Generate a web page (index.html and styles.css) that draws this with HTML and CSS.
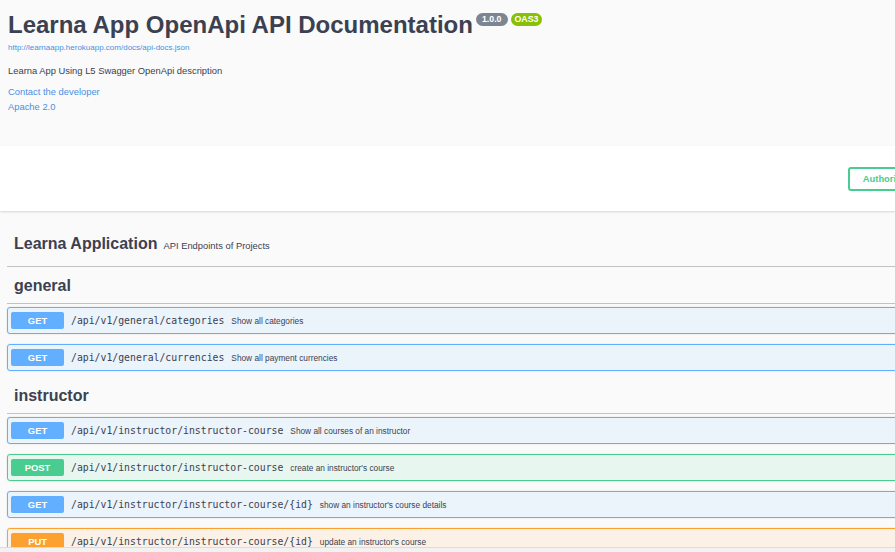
FILE: index.html
```html
<!DOCTYPE html>
<html lang="en">
<head>
<meta charset="utf-8">
<title>Learna App OpenApi API Documentation</title>
<link rel="stylesheet" href="styles.css">
</head>
<body>
<div class="info">
  <div class="wrapper info-inner">
    <div class="title-row">
      <h1 class="title">Learna App OpenApi API Documentation</h1>
      <span class="badge badge-version">1.0.0</span>
      <span class="badge badge-oas">OAS3</span>
    </div>
    <a class="url" href="#">http://learnaapp.herokuapp.com/docs/api-docs.json</a>
    <p class="description">Learna App Using L5 Swagger OpenApi description</p>
    <a class="info-link contact" href="#">Contact the developer</a>
    <a class="info-link license" href="#">Apache 2.0</a>
  </div>
</div>

<div class="schemes">
  <div class="wrapper schemes-inner">
    <button class="authorize">
      <span>Authorize</span>
      <svg class="lock" viewBox="0 0 20 20" width="13" height="13"><path d="M15.8 8H14V5.6C14 2.703 12.665 1 10 1 7.334 1 6 2.703 6 5.6V8H4c-.553 0-1 .646-1 1.199V17c0 .549.428 1.139.951 1.307l1.197.387C5.672 18.861 6.55 19 7.1 19h5.8c.549 0 1.428-.139 1.951-.307l1.196-.387c.524-.167.953-.757.953-1.306V9.199C17 8.646 16.352 8 15.8 8zM12 8H8V5.199C8 3.754 8.797 3 10 3c1.203 0 2 .754 2 2.199V8z"/></svg>
    </button>
  </div>
</div>

<div class="wrapper ops">
  <div class="group-title">
    <h2>Learna Application</h2>
    <small>API Endpoints of Projects</small>
  </div>

  <div class="tag"><h3>general</h3></div>
  <div class="op op-get">
    <span class="method">GET</span>
    <span class="path">/api/v1/general/categories</span>
    <span class="summary">Show all categories</span>
  </div>
  <div class="op op-get">
    <span class="method">GET</span>
    <span class="path">/api/v1/general/currencies</span>
    <span class="summary">Show all payment currencies</span>
  </div>

  <div class="tag"><h3>instructor</h3></div>
  <div class="op op-get">
    <span class="method">GET</span>
    <span class="path">/api/v1/instructor/instructor-course</span>
    <span class="summary">Show all courses of an instructor</span>
  </div>
  <div class="op op-post">
    <span class="method">POST</span>
    <span class="path">/api/v1/instructor/instructor-course</span>
    <span class="summary">create an instructor's course</span>
  </div>
  <div class="op op-get">
    <span class="method">GET</span>
    <span class="path">/api/v1/instructor/instructor-course/{id}</span>
    <span class="summary">show an instructor's course details</span>
  </div>
  <div class="op op-put">
    <span class="method">PUT</span>
    <span class="path">/api/v1/instructor/instructor-course/{id}</span>
    <span class="summary">update an instructor's course</span>
  </div>
</div>

<div class="bottom-edge"></div>
</body>
</html>
```

FILE: styles.css
```css
html, body {
  margin: 0;
  padding: 0;
}

body {
  background: #fafafa;
  color: #3b4151;
  font-family: "Liberation Sans", Arial, sans-serif;
  overflow: hidden;
  width: 895px;
  height: 552px;
}

.wrapper {
  width: 934px;
  padding: 0 7px;
  box-sizing: content-box;
}

/* ---------- info ---------- */
.info-inner {
  padding: 10px 0 32px 8px;
  display: flex;
  flex-direction: column;
  align-items: flex-start;
}

.title-row {
  display: flex;
  align-items: flex-start;
}

.title {
  margin: 0;
  font-size: 24px;
  line-height: 30px;
  font-weight: bold;
  color: #3b4151;
}

.badge {
  margin-top: 3px;
  height: 13px;
  line-height: 13px;
  border-radius: 20px;
  color: #fff;
  font-size: 8.8px;
  font-weight: bold;
}

.badge-version {
  margin-left: 3px;
  padding: 0 6px;
  background: #7d8492;
}

.badge-oas {
  margin-left: 3px;
  padding: 0 4px;
  background: #89bf04;
}

.url {
  margin-top: 2px;
  font-size: 8px;
  line-height: 11px;
  color: #4990e2;
  text-decoration: none;
}

.description {
  margin: 11px 0 0;
  font-size: 9.4px;
  line-height: 14px;
  color: #3b4151;
}

.info-link {
  font-size: 9.4px;
  line-height: 14px;
  color: #4990e2;
  text-decoration: none;
}

.contact {
  margin-top: 7px;
}

.license {
  margin-top: 1px;
}

/* ---------- schemes ---------- */
.schemes {
  background: #fff;
  box-shadow: 0 1px 2px 0 rgba(0, 0, 0, 0.15);
}

.schemes-inner {
  height: 65px;
  display: flex;
  align-items: center;
  justify-content: flex-end;
}

.authorize {
  display: flex;
  align-items: center;
  gap: 7px;
  height: 24px;
  padding: 0 13px;
  background: transparent;
  border: 2px solid #49cc90;
  border-radius: 3px;
  color: #49cc90;
  font-family: "Liberation Sans", Arial, sans-serif;
  font-size: 9.4px;
  font-weight: bold;
}

.lock {
  fill: #49cc90;
}

/* ---------- operations ---------- */
.ops {
  margin-top: 12px;
}

.group-title {
  display: flex;
  align-items: baseline;
  gap: 6px;
  padding: 11px 0 12px 7px;
  border-bottom: 1px solid rgba(59, 65, 81, 0.3);
}

.group-title h2 {
  margin: 0;
  font-size: 16px;
  line-height: 20px;
  font-weight: bold;
}

.group-title small {
  font-size: 9.4px;
}

.tag {
  padding: 9px 0 7px 7px;
  border-bottom: 1px solid rgba(59, 65, 81, 0.3);
  margin-bottom: 3px;
}

.tag h3 {
  margin: 0;
  font-size: 16px;
  line-height: 20px;
  font-weight: bold;
}

.op + .tag {
  padding-top: 5px;
}

.op {
  box-sizing: border-box;
  height: 27px;
  display: flex;
  align-items: center;
  padding: 0 3px;
  margin-bottom: 10px;
  border: 1px solid;
  border-radius: 3px;
  box-shadow: 0 0 2px rgba(0, 0, 0, 0.12);
}

.method {
  width: 53px;
  height: 17px;
  line-height: 17px;
  border-radius: 2px;
  text-align: center;
  color: #fff;
  font-size: 9.4px;
  font-weight: bold;
  flex: none;
}

.path {
  margin-left: 7px;
  font-family: "DejaVu Sans Mono", "Liberation Mono", monospace;
  font-size: 9.8px;
  color: #3b4151;
  white-space: nowrap;
}

.summary {
  margin-left: 7px;
  font-size: 8.3px;
  color: #3b4151;
  white-space: nowrap;
}

.op-get {
  border-color: #61affe;
  background: #ebf3fb;
}
.op-get .method { background: #61affe; }

.op-post {
  border-color: #49cc90;
  background: #e8f6f0;
}
.op-post .method { background: #49cc90; }

.op-put {
  border-color: #fca130;
  background: #fbf1e6;
}
.op-put .method { background: #fca130; }

.bottom-edge {
  position: fixed;
  left: 0;
  right: 0;
  bottom: 0;
  height: 4px;
  background: #f2f2f2;
  border-top: 1px solid #dcdcdc;
}
```
